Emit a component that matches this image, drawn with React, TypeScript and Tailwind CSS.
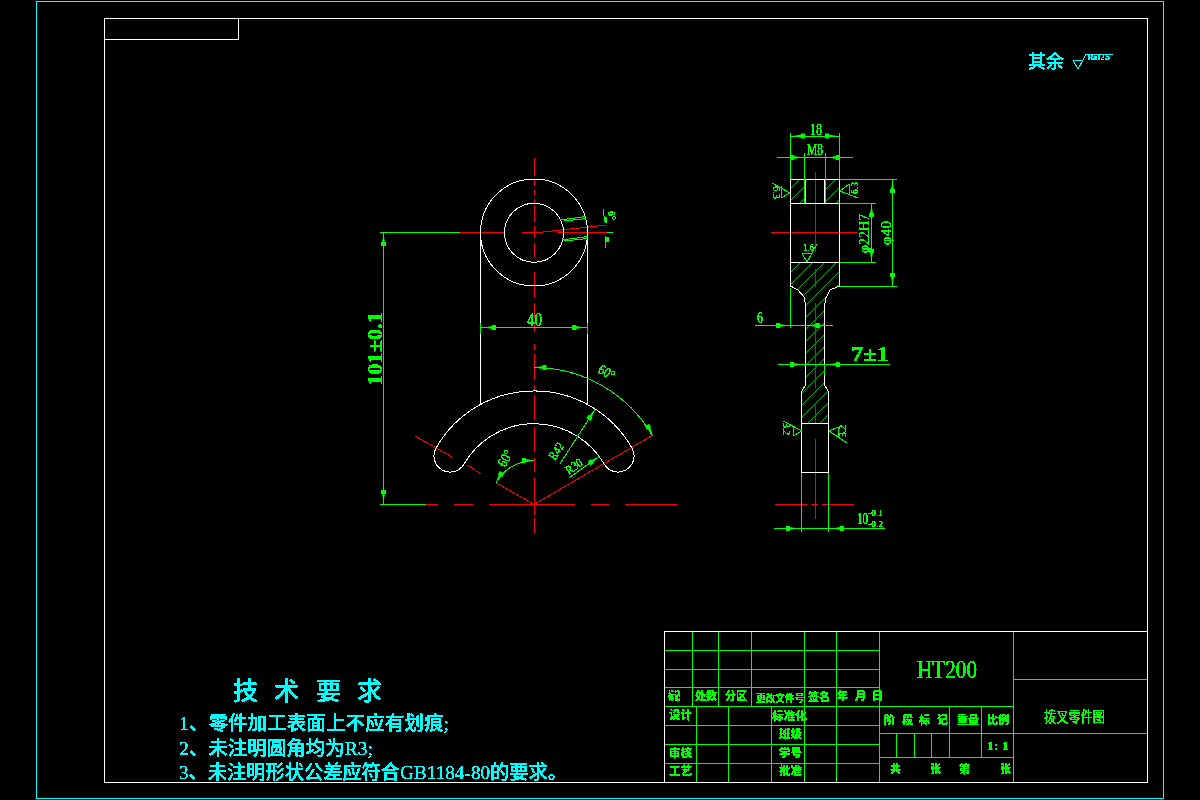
import React from "react";

const SERIF = "font-['Liberation_Serif','Noto_Sans_CJK_SC',serif]";
const GREEN = "fill-[#00ff00]";
const CYAN = "fill-[#00ffff]";

type TP = {
  x: number | string;
  y: number;
  s: number;
  w?: number;
  r?: number;
  c?: string;
  wt?: number;
  children: React.ReactNode;
};

function T({ x, y, s, w, r, c = GREEN, wt = 400, children }: TP) {
  const px = typeof x === "number" ? x : 0;
  return (
    <text
      x={x}
      y={y}
      fontSize={s}
      fontWeight={wt}
      textLength={w}
      lengthAdjust={w ? "spacingAndGlyphs" : undefined}
      transform={r !== undefined ? `rotate(${r} ${px} ${y})` : undefined}
      className={`${c} ${SERIF} stroke-none`}
    >
      {children}
    </text>
  );
}

function Lines({ d, color, sw = 1 }: { d: number[][]; color: string; sw?: number }) {
  const path = d.map((p) => `M${p[0]} ${p[1]}L${p[2]} ${p[3]}`).join("");
  return <path d={path} className={`${color} fill-none`} strokeWidth={sw} shapeRendering="crispEdges" />;
}

function A({ x, y, a }: { x: number; y: number; a: number }) {
  return (
    <g transform={`translate(${x} ${y}) rotate(${a})`} className={`${GREEN} stroke-none`}>
      <polygon points="0,0 -8,-1.4 -8,1.4" />
      <rect x={-12} y={-2.5} width={4} height={5} />
    </g>
  );
}

const vh = (x: number, ys: number[][]) => ys.map(([a, b]) => [x, a, x, b]);
const hh = (y: number, xs: number[][]) => xs.map(([a, b]) => [a, y, b, y]);

const W = "stroke-[#ffffff]";
const G = "stroke-[#00ff00]";
const R = "stroke-[#ff0000]";
const C = "stroke-[#00ffff]";

function hatch(from: number, to: number) {
  const out: number[][] = [];
  for (let c = from; c <= to; c += 12) out.push([760, c - 760, 860, c - 860]);
  return out;
}

const sectionPts =
  "790.5,262 839.5,262 839.5,286 830,290 826,298 824.5,305 824.5,385 828.5,391.5 828.5,423 801.5,423 801.5,391.5 805.5,385 805.5,305 804,297 798,290 790.5,286";

export default function App() {
  return (
    <div className="relative h-[800px] w-[1200px] overflow-hidden bg-black">
      <svg viewBox="0 0 1200 800" className="block h-[800px] w-[1200px]">
        <defs>
          <filter id="al" x="0" y="0" width="1" height="1" filterUnits="objectBoundingBox" colorInterpolationFilters="sRGB">
            <feComponentTransfer>
              <feFuncA type="discrete" tableValues="0 1 1 1" />
            </feComponentTransfer>
          </filter>
          <clipPath id="sec">
            <polygon points={sectionPts} />
          </clipPath>
          <clipPath id="top">
            <rect x={790} y={179} width={15} height={24} />
            <rect x={825} y={179} width={15} height={24} />
          </clipPath>
        </defs>

        {/* frames */}
        <rect x={36.5} y={1.5} width={1127} height={797} className={`${C} fill-none`} shapeRendering="crispEdges" />
        <rect x={104.5} y={18.5} width={1043} height={764} className={`${W} fill-none`} shapeRendering="crispEdges" />
        <rect x={104.5} y={18.5} width={134} height={21} className={`${W} fill-none`} shapeRendering="crispEdges" />

        {/* front view: construction lines */}
        <Lines
          color={R}
          d={[
            ...vh(534.5, [
              [158, 176], [179, 186], [190, 195], [199, 203], [205, 222], [226, 238], [243, 257], [272, 298], [303, 318], [322, 332],
              [344, 350], [354, 380], [385, 390], [395, 420], [427, 452], [458, 472], [477, 515], [518, 533],
            ]),
            ...hh(232.5, [[460, 505], [522, 540], [557, 607]]),
            ...hh(504.5, [[426, 438], [454, 473], [489, 575], [591, 609], [625, 677]]),
            [534, 233, 607, 225],
            [534, 504.5, 653, 435],
            [534, 504.5, 496, 482.7],
            [415, 436, 453, 457.5],
            [467.5, 465, 481.5, 474.5],
          ]}
        />
        <g className={`${W} fill-none`} strokeWidth={1} shapeRendering="crispEdges">
          <circle cx={534} cy={232.5} r={53.5} />
          <circle cx={534} cy={232.8} r={29.5} />
          <path d="M480.5 232V405M587.5 232V404" />
          <path d="M436.1 448A112.5 112.5 0 0 1 631.9 448A16 16 0 0 1 604.1 464A81 81 0 0 0 464 464A16 16 0 0 1 436.1 448Z" />
        </g>

        {/* front view: dimensions */}
        <Lines
          color={G}
          d={[
            [380, 232.5, 460, 232.5],
            [383.5, 232, 383.5, 504],
            [380, 504.5, 426, 504.5],
            [480.5, 327.5, 587.5, 327.5],
            [480.5, 323, 480.5, 334],
            [587.5, 323, 587.5, 334],
            [607, 232.5, 613, 232.5],
            [560, 220, 586, 216.5],
            [564, 221, 586, 218.5],
            [562, 240, 588, 236.5],
            [564, 241, 588, 238.5],
            [603, 209, 605, 222],
            [606, 236, 605.5, 248],
            [559.5, 464.5, 595, 409.5],
            [569.5, 477.5, 599, 456.5],
          ]}
        />
        <g className={`${G} fill-none`} strokeWidth={1} shapeRendering="crispEdges">
          <path d="M534 367.5A137 137 0 0 1 652.6 436" />
          <path d="M534 460.5A44 44 0 0 0 496 482.5" />
        </g>
        <A x={383.5} y={234} a={-90} />
        <A x={383.5} y={502} a={90} />
        <A x={484} y={327.5} a={180} />
        <A x={584} y={327.5} a={0} />
        <A x={534.5} y={367.5} a={180} />
        <A x={653} y={435.5} a={60} />
        <A x={534} y={460.5} a={0} />
        <A x={496} y={482.7} a={120} />
        <A x={595} y={409.5} a={-57} />
        <A x={599} y={456.5} a={-35} />
        <g className={`${GREEN} stroke-none`} shapeRendering="crispEdges">
          <rect x={604.5} y={217} width={2.5} height={6} />
          <rect x={606} y={237} width={2.5} height={5} />
        </g>

        {/* side view: hatching */}
        <g clipPath="url(#sec)">
          <Lines color={G} d={hatch(1051, 1243)} sw={0.7} />
        </g>
        <g clipPath="url(#top)">
          <Lines color={G} d={hatch(967, 1039)} sw={0.7} />
        </g>

        {/* side view: construction lines */}
        <Lines
          color={R}
          d={[
            ...vh(815.5, [[172, 252], [269, 287], [303, 388], [405, 423], [439, 519]]),
            ...hh(232.5, [[771, 857]]),
            ...hh(504.5, [[775, 807], [811, 818], [822, 854]]),
          ]}
        />
        <g className={`${W} fill-none`} strokeWidth={1} shapeRendering="crispEdges">
          <path d="M790.5 179.5H839.5V286L830 290L826 298L824.5 305V385L828.5 391.5V472.5H801.5V391.5L805.5 385V305L804 297L798 290L790.5 286Z" />
          <path d="M790.5 203.5H839.5M790.5 262.5H839.5M801.5 423.5H828.5M805.5 179.5V203.5M824.5 179.5V203.5" />
        </g>

        {/* side view: dimensions */}
        <Lines
          color={G}
          d={[
            [790.5, 136.5, 839.5, 136.5],
            [790.5, 133, 790.5, 179],
            [839.5, 133, 839.5, 179],
            [777, 157.5, 853, 157.5],
            [804.5, 153, 804.5, 203],
            [825.5, 153, 825.5, 203],
            [840, 179.5, 897, 179.5],
            [840, 286.5, 897, 286.5],
            [892.5, 180, 892.5, 286],
            [840, 203.5, 876, 203.5],
            [840, 262.5, 876, 262.5],
            [871.5, 204, 871.5, 262],
            [755, 325.5, 833, 325.5],
            [790.5, 288, 790.5, 328],
            [778, 364.5, 890, 364.5],
            [824.5, 365, 824.5, 375],
            [774, 528.5, 885, 528.5],
            [801.5, 473, 801.5, 532],
            [828.5, 473, 828.5, 532],
            // roughness marks
            [772, 183, 790, 193],
            [781, 186, 781, 198],
            [781, 198, 790, 193],
            [840, 191, 849, 184],
            [849, 184, 849, 195],
            [840, 191, 858, 198],
            [802, 253, 812, 253],
            [802, 253, 807, 262],
            [812, 253, 807, 262],
            [812, 253, 817, 244],
            [783, 421, 802, 431],
            [793, 427, 793, 436],
            [793, 436, 802, 431],
            [829, 431, 838, 427],
            [838, 427, 838, 437],
            [829, 431, 847, 443],
          ]}
        />
        <A x={793} y={136} a={180} />
        <A x={837} y={136} a={0} />
        <A x={802} y={157.5} a={0} />
        <A x={828} y={157.5} a={180} />
        <A x={892.5} y={181} a={-90} />
        <A x={892.5} y={285} a={90} />
        <A x={871.5} y={205} a={-90} />
        <A x={871.5} y={261} a={90} />
        <A x={788} y={325.5} a={0} />
        <A x={808} y={325.5} a={180} />
        <A x={802} y={364.5} a={0} />
        <A x={828} y={364.5} a={180} />
        <A x={798} y={528.5} a={0} />
        <A x={832} y={528.5} a={180} />

        {/* title block */}
        <Lines
          color={G}
          d={[
            ...hh(650.5, [[664, 879]]),
            ...hh(669.5, [[664, 879]]),
            ...hh(687.5, [[664, 879]]),
            ...hh(706.5, [[664, 1013]]),
            ...hh(725.5, [[664, 879]]),
            ...hh(744.5, [[664, 879]]),
            ...hh(763.5, [[664, 879]]),
            ...hh(679.5, [[1013, 1147]]),
            ...hh(733.5, [[879, 1147]]),
            ...hh(757.5, [[879, 1013]]),
            ...vh(692.5, [[631, 706]]),
            ...vh(718.5, [[631, 706]]),
            ...vh(751.5, [[631, 706]]),
            ...vh(804.5, [[631, 782]]),
            ...vh(836.5, [[631, 782]]),
            ...vh(879.5, [[631, 782]]),
            ...vh(696.5, [[706, 782]]),
            ...vh(728.5, [[706, 782]]),
            ...vh(771.5, [[706, 782]]),
            ...vh(1013.5, [[631, 782]]),
            ...vh(949.5, [[706, 757]]),
            ...vh(981.5, [[706, 757]]),
            ...vh(896.5, [[733, 757]]),
            ...vh(914.5, [[733, 757]]),
            ...vh(931.5, [[733, 757]]),
          ]}
        />
        <rect x={664.5} y={631.5} width={483} height={151} className={`${W} fill-none`} shapeRendering="crispEdges" />

        {/* surface finish top right */}
        <path d="M1073 60H1083L1078 69ZM1083 60L1086 54H1113" className={`${C} fill-none`} shapeRendering="crispEdges" />

        <g filter="url(#al)">
          {/* dimension text */}
          <T x={382} y={386} s={21} w={74} r={-90} wt={700}>101±0.1</T>
          <T x={527} y={326} s={18} w={15}>40</T>
          <T x={608} y={211} s={11} w={9} r={90}>6°</T>
          <T x={597} y={372} s={14} w={17} r={30}>60°</T>
          <T x={505} y={468} s={14} w={17} r={-60}>60°</T>
          <T x={555} y={461} s={13} w={18} r={-57}>R42</T>
          <T x={569} y={475} s={13} w={18} r={-35}>R30</T>
          <T x={810} y={135} s={16} w={12}>18</T>
          <T x={807} y={155} s={16} w={16}>M8</T>
          <T x={869} y={253} s={15} w={39} r={-90}>φ22H7</T>
          <T x={891} y={245} s={15} w={24} r={-90}>φ40</T>
          <T x={773} y={186} s={10} w={13} r={90}>6.3</T>
          <T x={858} y={194} s={10} w={12} r={-90}>6.3</T>
          <T x={803} y={251} s={11} w={11}>1.6</T>
          <T x={783} y={423} s={10} w={12} r={90}>3.2</T>
          <T x={846} y={437} s={10} w={12} r={-90}>3.2</T>
          <T x={757} y={323} s={16} w={6}>6</T>
          <T x={851} y={361} s={22} w={38} wt={700}>7±1</T>
          <T x={857} y={524} s={16} w={11}>10</T>
          <T x={868} y={516} s={8} w={15}>-0.1</T>
          <T x={868} y={527} s={8} w={15}>-0.2</T>

          {/* technical requirements */}
          <T x="233 274 316 357" y={700} s={25} c={CYAN} wt={500}>技术要求</T>
          <T x={179} y={730} s={19.4} w={270} c={CYAN} wt={500}>1、零件加工表面上不应有划痕;</T>
          <T x={179} y={755} s={19.4} w={194} c={CYAN} wt={500}>2、未注明圆角均为R3;</T>
          <T x={179} y={779} s={19.4} w={388} c={CYAN} wt={500}>3、未注明形状公差应符合GB1184-80的要求。</T>
          <T x={1028} y={68} s={18} w={36} c={CYAN} wt={500}>其余</T>
          <T x={1088} y={60} s={8} w={22} c={CYAN} wt={700}>Ra12.5</T>

          {/* title block text */}
          <T x={668} y={700} s={11} w={12} wt={700}>标记</T>
          <T x={695} y={700} s={11} w={22} wt={700}>处数</T>
          <T x={725} y={700} s={11} w={22} wt={700}>分区</T>
          <T x={756} y={702} s={10} w={48} wt={700}>更改文件号</T>
          <T x={808} y={701} s={11} w={22} wt={700}>签名</T>
          <T x="837 855 872" y={700} s={11} wt={700}>年月日</T>
          <T x={669} y={719} s={11} w={23} wt={700}>设计</T>
          <T x={772} y={720} s={11} w={35} wt={700}>标准化</T>
          <T x={779} y={738} s={11} w={23} wt={700}>班级</T>
          <T x={669} y={757} s={11} w={23} wt={700}>审核</T>
          <T x={779} y={757} s={11} w={23} wt={700}>学号</T>
          <T x={669} y={775} s={11} w={23} wt={700}>工艺</T>
          <T x={779} y={775} s={11} w={23} wt={700}>批准</T>

          <T x={917} y={678} s={26} w={60}>HT200</T>
          <T x="884 902 919 937" y={724} s={11} wt={700}>阶段标记</T>
          <T x={957} y={724} s={11} w={22} wt={700}>重量</T>
          <T x={987} y={724} s={11} w={22} wt={700}>比例</T>
          <T x={987} y={750} s={12} w={22} wt={700}>1: 1</T>
          <T x={890} y={773} s={11} wt={700}>共</T>
          <T x={930} y={773} s={11} wt={700}>张</T>
          <T x={959} y={773} s={11} wt={700}>第</T>
          <T x={1000} y={773} s={11} wt={700}>张</T>
          <T x={1044} y={722} s={15} w={61}>拨叉零件图</T>
        </g>
      </svg>
    </div>
  );
}
